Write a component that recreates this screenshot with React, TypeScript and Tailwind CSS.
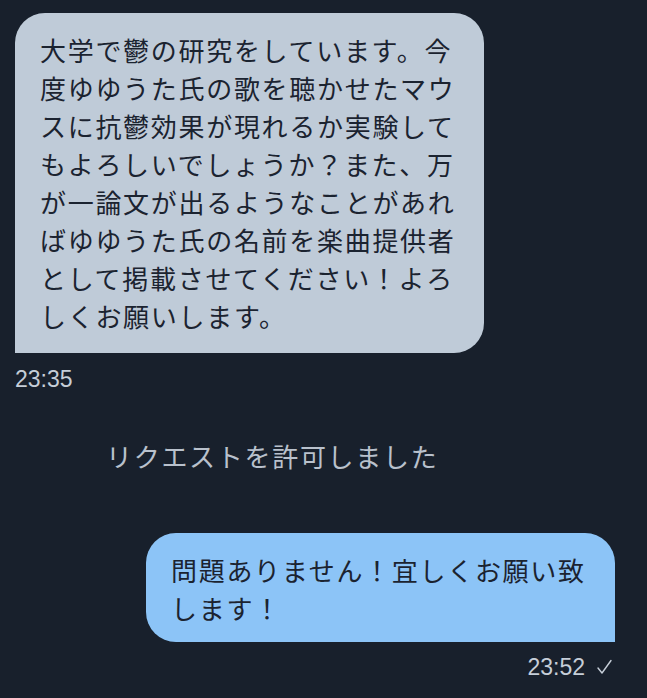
import React from "react";

const jp = { fontFamily: '"Noto Sans CJK JP", "Noto Sans", sans-serif' };
const num = { fontFamily: '"Liberation Sans", Arial, sans-serif' };

export default function App() {
  const lines1 = [
    "大学で鬱の研究をしています。今",
    "度ゆゆうた氏の歌を聴かせたマウ",
    "スに抗鬱効果が現れるか実験して",
    "もよろしいでしょうか？また、万",
    "が一論文が出るようなことがあれ",
    "ばゆゆうた氏の名前を楽曲提供者",
    "として掲載させてください！よろ",
    "しくお願いします。",
  ];
  const lines2 = ["問題ありません！宜しくお願い致", "します！"];
  return (
    <div className="w-[647px] h-[698px] bg-[#18202c] overflow-hidden flex flex-col" style={jp}>
      <div className="ml-[15px] mt-[13px] w-[469px] h-[340px] bg-[#bfcbd8] rounded-[30px] rounded-bl-none pl-[25px] pt-[18px] text-[#1b2330] text-[26px] leading-[38px] tracking-[1.7px]">
        {lines1.map((l, i) => (
          <div key={i} className="whitespace-nowrap">{l}</div>
        ))}
      </div>
      <div className="ml-[15px] mt-[13px] text-[23px] leading-[26px] text-[#c6ced8]" style={num}>23:35</div>
      <div className="ml-[106px] mt-[45px] text-[26px] leading-[38px] tracking-[1.7px] text-[#b9c1cc] whitespace-nowrap">
        リクエストを許可しました
      </div>
      <div className="ml-[146px] mt-[58px] w-[469px] h-[109px] bg-[#8cc4f7] rounded-[30px] rounded-br-none pl-[25px] pt-[18px] text-[#1b2330] text-[26px] leading-[38px] tracking-[1.7px]">
        {lines2.map((l, i) => (
          <div key={i} className="whitespace-nowrap">{l}</div>
        ))}
      </div>
      <div className="mt-[12px] w-[612px] flex justify-end items-center gap-[12px] text-[23px] leading-[26px] text-[#c6ced8]" style={num}>
        <span>23:52</span>
        <svg width="15" height="16" viewBox="0 0 15 16" fill="none" stroke="#c6ced8" strokeWidth="1.4" strokeLinecap="round" strokeLinejoin="round">
          <path d="M1 9 L5 14 L14 1.5" />
        </svg>
      </div>
    </div>
  );
}
